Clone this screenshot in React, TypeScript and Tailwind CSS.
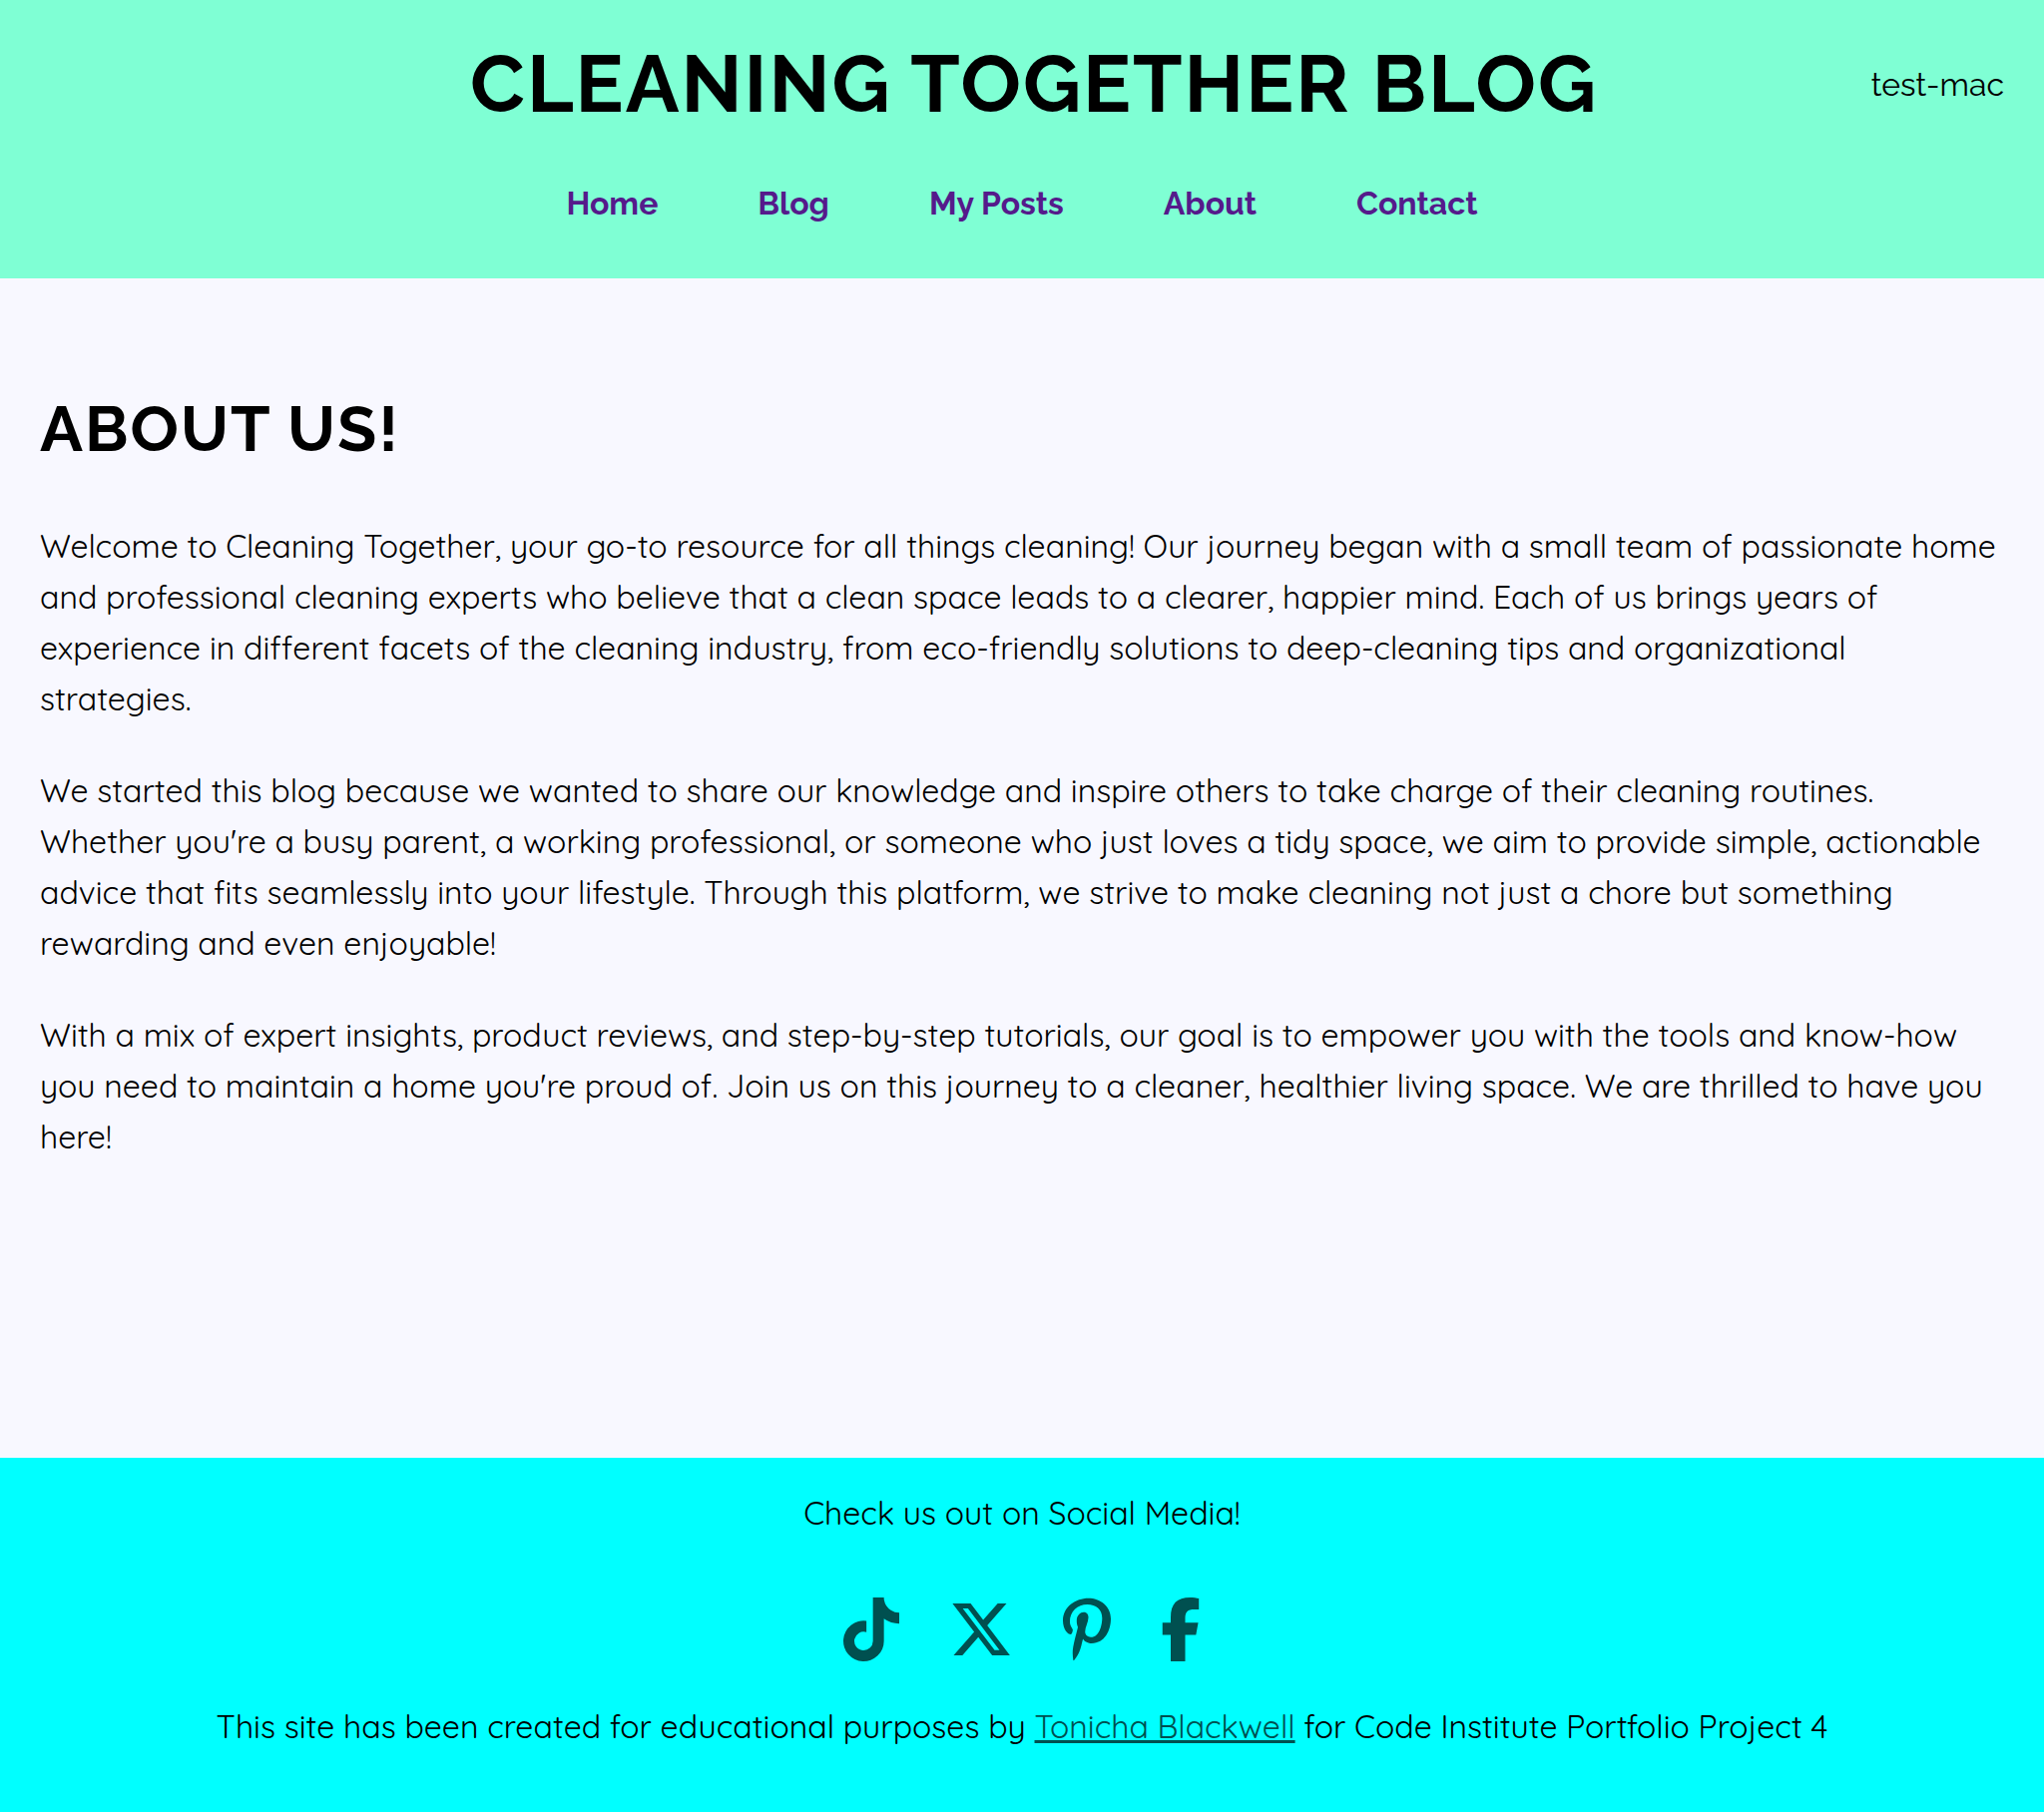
import { FaFacebookF, FaPinterestP, FaTiktok, FaXTwitter } from "react-icons/fa6";

const navLinks = ["Home", "Blog", "My Posts", "About", "Contact"];

const paragraphs = [
  "Welcome to Cleaning Together, your go-to resource for all things cleaning! Our journey began with a small team of passionate home and professional cleaning experts who believe that a clean space leads to a clearer, happier mind. Each of us brings years of experience in different facets of the cleaning industry, from eco-friendly solutions to deep-cleaning tips and organizational strategies.",
  "We started this blog because we wanted to share our knowledge and inspire others to take charge of their cleaning routines. Whether you're a busy parent, a working professional, or someone who just loves a tidy space, we aim to provide simple, actionable advice that fits seamlessly into your lifestyle. Through this platform, we strive to make cleaning not just a chore but something rewarding and even enjoyable!",
  "With a mix of expert insights, product reviews, and step-by-step tutorials, our goal is to empower you with the tools and know-how you need to maintain a home you're proud of. Join us on this journey to a cleaner, healthier living space. We are thrilled to have you here!",
];

const socials = [
  { label: "TikTok", Icon: FaTiktok, size: "h-16 w-14" },
  { label: "X", Icon: FaXTwitter, size: "h-16 w-16" },
  { label: "Pinterest", Icon: FaPinterestP, size: "h-16 w-12" },
  { label: "Facebook", Icon: FaFacebookF, size: "h-16 w-10" },
];

function Header() {
  return (
    <header className="bg-[#7fffd4] px-10 pt-5 pb-[50px] font-[Raleway,Lato,sans-serif]">
      <div className="grid grid-cols-[1fr_auto_1fr] items-center">
        <h1 className="col-start-2 pl-6 text-[80px] leading-[128px] font-bold tracking-[2px]">CLEANING TOGETHER BLOG</h1>
        <span className="justify-self-end text-[32px] leading-[51px]">test-mac</span>
      </div>
      <nav aria-label="Main" className="mt-[30px]">
        <ul className="flex flex-wrap justify-center gap-x-[100px]">
          {navLinks.map((label) => (
            <li key={label}>
              <a href="#" className="block text-[32px] leading-[51px] font-bold text-[#551a8b]">
                {label}
              </a>
            </li>
          ))}
        </ul>
      </nav>
    </header>
  );
}

function Footer() {
  return (
    <footer className="flex flex-col items-center bg-[#00ffff] px-10 pt-[30px] pb-[60px] text-center">
      <p>Check us out on Social Media!</p>
      <ul className="mt-[59px] mb-10 flex gap-[50px]">
        {socials.map(({ label, Icon, size }) => (
          <li key={label}>
            <a href="#" aria-label={label} className="block text-[#005050]">
              <Icon className={size} />
            </a>
          </li>
        ))}
      </ul>
      <p>
        This site has been created for educational purposes by{" "}
        <a href="#" className="text-[#005050] underline">
          Tonicha Blackwell
        </a>{" "}
        for Code Institute Portfolio Project 4
      </p>
    </footer>
  );
}

export default function App() {
  return (
    <div className="flex min-h-screen flex-col bg-[#f8f8ff] font-[Quicksand,'Open_Sans',sans-serif] text-[32px] leading-[51px] text-black">
      <Header />
      <main className="flex-1 px-10 pt-[100px] pb-[100px]">
        <h2 className="mb-[41px] font-[Raleway,Lato,sans-serif] text-[64px] leading-[102px] font-bold tracking-[2px]">ABOUT US!</h2>
        <div className="flex flex-col gap-[41px]">
          {paragraphs.map((text) => (
            <p key={text}>{text}</p>
          ))}
        </div>
      </main>
      <Footer />
    </div>
  );
}
